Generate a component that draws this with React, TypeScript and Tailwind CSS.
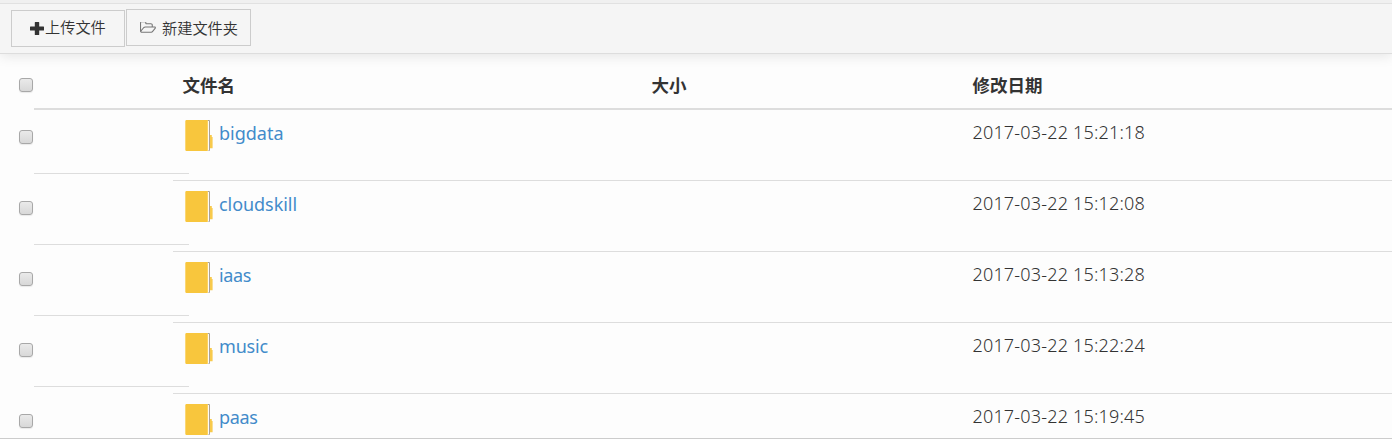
type Entry = { name: string; modified: string; nameClass: string };

const entries: Entry[] = [
  { name: 'bigdata', modified: '2017-03-22 15:21:18', nameClass: 'tracking-[0px]' },
  { name: 'cloudskill', modified: '2017-03-22 15:12:08', nameClass: 'tracking-[-0.05px]' },
  { name: 'iaas', modified: '2017-03-22 15:13:28', nameClass: 'tracking-[-0.4px]' },
  { name: 'music', modified: '2017-03-22 15:22:24', nameClass: 'tracking-[-0.2px]' },
  { name: 'paas', modified: '2017-03-22 15:19:45', nameClass: 'tracking-[-0.3px]' },
];

function PlusIcon() {
  return (
    <svg viewBox="0 0 14 13" className="h-[13px] w-[14px]" fill="#333">
      <path d="M5.3 0h3.4a.5.5 0 0 1 .5.5v3.9h4.3a.5.5 0 0 1 .5.5v3.2a.5.5 0 0 1-.5.5H9.2v3.9a.5.5 0 0 1-.5.5H5.3a.5.5 0 0 1-.5-.5V8.6H.5a.5.5 0 0 1-.5-.5V4.9a.5.5 0 0 1 .5-.5h4.3V.5a.5.5 0 0 1 .5-.5z" />
    </svg>
  );
}

function FolderOpenIcon() {
  return (
    <svg viewBox="0 128 1920 1408" className="h-[12px] w-[16px]" fill="#777">
      <path d="M1781 803q0-35-53-35h-1088q-40 0-85.5 21.5t-71.5 52.5l-294 363q-18 24-18 40 0 35 53 35h1088q40 0 86-22t71-53l294-363q18-22 18-39zm-1141-163h768v-160q0-40-28-68t-68-28h-576q-40 0-68-28t-28-68v-64q0-40-28-68t-68-28h-320q-40 0-68 28t-28 68v853l256-315q44-53 116-87.5t140-34.5zm1269 163q0 62-46 120l-295 363q-43 53-116 87.5t-140 34.5h-1088q-92 0-158-66t-66-158v-960q0-92 66-158t158-66h320q92 0 158 66t66 158v32h544q92 0 158 66t66 158v160h192q54 0 99 24.5t67 70.5q15 32 15 68z" />
    </svg>
  );
}

function FolderIcon() {
  return (
    <svg viewBox="0 0 28 31" className="h-[31px] w-[28px] shrink-0">
      <path d="M22 .5h3v30h-3z" fill="#fff" />
      <path d="M22.5 .5h2v30h-1" fill="none" stroke="#aaa093" strokeWidth="1" />
      <path d="M25 15h1.8v2h.8v11.200h-2.600z" fill="#f8ca4c" />
      <rect x=".4" y="0" width="22.6" height="31" rx="1" fill="#f8c63d" />
      <path d="M.5 1v29M22.6 1v29" stroke="#fbd66f" strokeWidth=".8" />
    </svg>
  );
}

function Checkbox() {
  return (
    <input
      type="checkbox"
      className="block h-[14px] w-[14px] appearance-none rounded-[3px] border border-[#a8a8a8] bg-linear-to-b from-[#eaeaea] to-[#d8d8d8] shadow-[0_1px_1px_rgba(0,0,0,0.08)] checked:bg-[#a0a0a0]"
    />
  );
}

function Row({ entry }: { entry: Entry }) {
  return (
    <div className="flex h-[71px] shrink-0">
      <div className="w-[34px] shrink-0 pt-[20px] pl-[19px]">
        <Checkbox />
      </div>
      <div className="h-[64px] w-[155px] shrink-0 border-b border-[#ddd]" />
      <div className="-ml-4 flex flex-1 border-b border-[#ddd]">
        <div className="flex w-[799.5px] shrink-0 pt-[10px] pl-[12px]">
          <FolderIcon />
          <a
            href="#"
            className={`ml-[6px] h-[26px] text-[18px] leading-[26px] text-[#428bca] ${entry.nameClass}`}
          >
            {entry.name}
          </a>
        </div>
        <div className="pt-[9px] text-[18px] leading-[26px] font-[350] tracking-[0.18px] whitespace-nowrap">
          {entry.modified}
        </div>
      </div>
    </div>
  );
}

export default function App() {
  return (
    <div className="flex h-[439px] w-[1392px] flex-col overflow-hidden border-b border-[#ccc] bg-[#fdfdfd] font-['Noto_Sans','Noto_Sans_CJK_SC',sans-serif] text-[#333]">
      <header className="flex h-[54px] shrink-0 flex-col border-b border-[#ddd] bg-[#f5f5f5] shadow-[0_2px_12px_rgba(0,0,0,0.1)]">
        <div className="h-[4px] shrink-0 border-b border-[#e1e1e1] bg-[#f0f0f0]" />
        <div className="flex items-start gap-px pt-[5px] pl-[11px] font-['Noto_Sans_CJK_SC',sans-serif] text-[15.2px] font-[350]">
          <button className="mt-px flex h-[37px] w-[114px] items-center border border-[#ccc] pl-[18px] leading-[35px]">
            <PlusIcon />
            <span className="ml-px -mt-[4px]">上传文件</span>
          </button>
          <button className="flex h-[37px] w-[125px] items-center border border-[#ccc] pl-[13px] leading-[35px]">
            <FolderOpenIcon />
            <span className="ml-[6px]">新建文件夹</span>
          </button>
        </div>
      </header>
      <main className="flex min-h-0 flex-1 flex-col">
        <div className="flex h-[56px] shrink-0">
          <div className="w-[34px] shrink-0 pt-[24px] pl-[19px]">
            <Checkbox />
          </div>
          <div className="flex flex-1 border-b-2 border-[#ddd] pt-[18px] pl-[148.5px] font-['Noto_Sans_CJK_SC',sans-serif] text-[17.5px] leading-[26px] font-bold">
            <div className="w-[469px]">文件名</div>
            <div className="w-[321px]">大小</div>
            <div>修改日期</div>
          </div>
        </div>
        {entries.map((entry) => (
          <Row key={entry.name} entry={entry} />
        ))}
      </main>
    </div>
  );
}
